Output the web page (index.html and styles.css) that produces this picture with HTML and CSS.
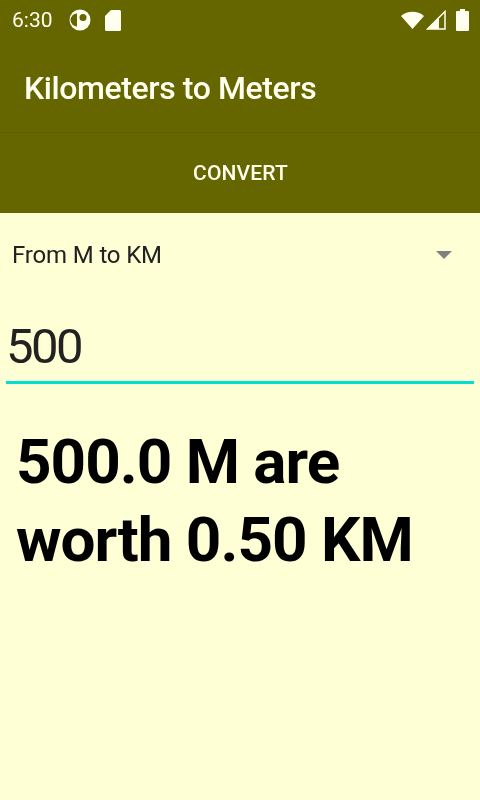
FILE: index.html
```html
<!DOCTYPE html>
<html>
  <head>
    <title>Kilometers to Meters</title>
    <link rel="stylesheet" href="styles.css">
  </head>
  <body>
    <div class="status-bar">
      <span class="clock">6:30</span>
      <svg class="icon-p" width="22" height="22" viewBox="0 0 22 22">
        <circle cx="11" cy="11" r="10.500" fill="#fffff0"/>
        <path d="M8 4.500a6.500 6.500 0 0 0 0 13z" fill="#666600"/>
        <circle cx="14" cy="8.500" r="3.500" fill="#666600"/>
      </svg>
      <svg class="icon-sd" width="16" height="21" viewBox="0 0 16 21">
        <path d="M6 0h8.500a1.500 1.500 0 0 1 1.500 1.500v18a1.500 1.500 0 0 1-1.500 1.500h-13a1.500 1.500 0 0 1-1.500-1.500v-13.500z" fill="#fffff0"/>
      </svg>
      <span class="spacer"></span>
      <svg class="icon-wifi" width="23" height="18" viewBox="0 0 23 18">
        <path d="M0 5a18 18 0 0 1 23 0l-11.500 13z" fill="#fffff0"/>
      </svg>
      <svg class="icon-signal" width="20" height="20" viewBox="0 0 20 20">
        <path d="M19 1.500v17.500h-17.500z" fill="none" stroke="#fffff0" stroke-width="1.500"/>
        <path d="M13 8v11h-12z" fill="#fffff0"/>
      </svg>
      <svg class="icon-battery" width="13" height="22" viewBox="0 0 13 22">
        <path d="M4 0h5v2h3a1 1 0 0 1 1 1v18a1 1 0 0 1-1 1h-11a1 1 0 0 1-1-1v-18a1 1 0 0 1 1-1h3z" fill="#fffff0"/>
      </svg>
    </div>
    <div class="app-bar"><span class="soft">Kilometers to Meters</span></div>
    <div class="tab-bar"><span class="soft">CONVERT</span></div>
    <div class="content">
      <div class="spinner">
        <span class="soft">From M to KM</span>
        <span class="spinner-arrow"></span>
      </div>
      <div class="amount"><span class="soft">500</span></div>
      <div class="result soft">500.0 M are worth 0.50 KM</div>
    </div>
  </body>
</html>
```

FILE: styles.css
```css
html, body {
  margin: 0;
  height: 100%;
}

body {
  display: flex;
  flex-direction: column;
  width: 480px;
  height: 800px;
  overflow: hidden;
  font-family: Roboto, sans-serif;
  background-color: #ffffd6;
}

.soft {
  filter: blur(0.5px);
}

.status-bar {
  display: flex;
  align-items: center;
  height: 40px;
  padding: 0 11px 0 12px;
  background-color: #666600;
  color: #fffff0;
  font-size: 21px;
}

.status-bar svg {
  filter: blur(0.5px);
}

.clock {
  margin-right: 16px;
  filter: blur(0.4px);
}

.icon-sd {
  margin-left: 14px;
}

.spacer {
  flex: 1;
}

.icon-signal {
  margin-left: 2px;
}

.icon-battery {
  margin-left: 10px;
}

.app-bar {
  display: flex;
  align-items: center;
  height: 93px;
  box-sizing: border-box;
  padding: 4px 24px 0;
  background-color: #666600;
  border-bottom: 1px solid #5f5f00;
  color: #fffff0;
  font-size: 32px;
  font-weight: 500;
  letter-spacing: -0.4px;
}

.tab-bar {
  display: flex;
  align-items: center;
  justify-content: center;
  height: 80px;
  padding-left: 1px;
  box-sizing: border-box;
  background-color: #666600;
  color: #fffff0;
  font-size: 21px;
  font-weight: 500;
  letter-spacing: 0.15px;
}

.content {
  flex: 1;
}

.spinner {
  display: flex;
  align-items: center;
  justify-content: space-between;
  height: 84px;
  padding: 0 28px 0 12px;
  color: #222222;
  font-size: 24px;
  letter-spacing: -0.15px;
}

.spinner-arrow {
  width: 0;
  height: 0;
  border-left: 8px solid transparent;
  border-right: 8px solid transparent;
  border-top: 8px solid #808080;
}

.amount {
  height: 68px;
  line-height: 68px;
  margin: 16px 6px 0;
  border-bottom: 3px solid #00e0cc;
  color: #222222;
  font-size: 49px;
  letter-spacing: -2.500px;
}

.result {
  margin-top: 39px;
  padding: 0 16px;
  color: #000000;
  font-size: 62px;
  font-weight: 700;
  letter-spacing: -1px;
  line-height: 78px;
}
```
